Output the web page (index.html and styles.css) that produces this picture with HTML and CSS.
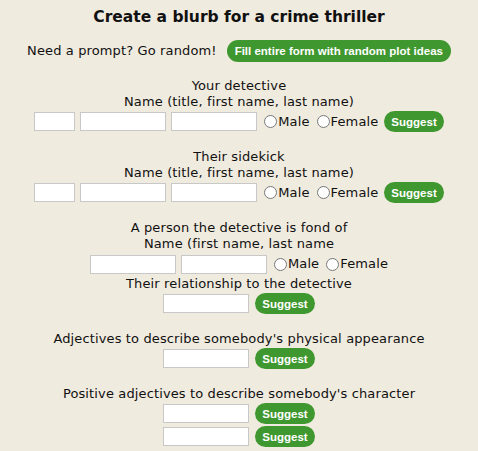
FILE: index.html
```html
<!DOCTYPE html>
<html lang="en">
<head>
    <meta charset="UTF-8">
    <title>Crime thriller blurb</title>
    <link rel="stylesheet" href="styles.css">
</head>
<body>
    <div class="container">
        <h2>Create a blurb for a crime thriller</h2>

        <div class="prompt">
            <span>Need a prompt? Go random!</span>
            <button class="btn fill-btn">Fill entire form with random plot ideas</button>
        </div>

        <div class="section">
            <p>Your detective</p>
            <p>Name (title, first name, last name)</p>
            <div class="row">
                <input type="text" class="small">
                <input type="text">
                <input type="text">
                <label class="radio"><input type="radio" name="g1">Male</label>
                <label class="radio"><input type="radio" name="g1">Female</label>
                <button class="btn">Suggest</button>
            </div>
        </div>

        <div class="section">
            <p>Their sidekick</p>
            <p>Name (title, first name, last name)</p>
            <div class="row">
                <input type="text" class="small">
                <input type="text">
                <input type="text">
                <label class="radio"><input type="radio" name="g2">Male</label>
                <label class="radio"><input type="radio" name="g2">Female</label>
                <button class="btn">Suggest</button>
            </div>
        </div>

        <div class="section">
            <p>A person the detective is fond of</p>
            <p>Name (first name, last name</p>
            <div class="row plain">
                <input type="text">
                <input type="text">
                <label class="radio"><input type="radio" name="g3">Male</label>
                <label class="radio"><input type="radio" name="g3">Female</label>
            </div>
            <p>Their relationship to the detective</p>
            <div class="row">
                <input type="text">
                <button class="btn">Suggest</button>
            </div>
        </div>

        <div class="section">
            <p>Adjectives to describe somebody's physical appearance</p>
            <div class="row">
                <input type="text">
                <button class="btn">Suggest</button>
            </div>
        </div>

        <div class="section">
            <p>Positive adjectives to describe somebody's character</p>
            <div class="row">
                <input type="text">
                <button class="btn">Suggest</button>
            </div>
            <div class="row">
                <input type="text">
                <button class="btn">Suggest</button>
            </div>
        </div>
    </div>
</body>
</html>
```

FILE: styles.css
```css
body {
    font-family: "DejaVu Sans", Verdana, sans-serif;
    font-size: 13px;
    line-height: 16px;
    letter-spacing: 0.13px;
    background: #f0ebdf;
    color: #111;
    margin: 0;
    padding: 0;
}
.container {
    text-align: center;
    padding-top: 7px;
}
h2 {
    font-size: 15.5px;
    line-height: 20px;
    letter-spacing: 0;
    margin: 0;
}
.prompt {
    display: flex;
    justify-content: center;
    align-items: center;
    gap: 9px;
    margin-top: 13px;
}
.section {
    margin-top: 16px;
}
.section p {
    margin: 0;
}
.row {
    display: flex;
    justify-content: center;
    align-items: center;
    gap: 5px;
    height: 23px;
}
.row.plain {
    height: 24px;
}
input[type="text"] {
    width: 82px;
    height: 15px;
    padding: 1px;
    border: 1px solid #c8c8c8;
    background: white;
    margin: 0;
}
input.small {
    width: 37px;
}
.radio {
    display: flex;
    align-items: center;
}
.radio input {
    width: 13px;
    height: 13px;
    margin: 0 1px 0 2px;
}
.btn {
    font-family: "Liberation Sans", Arial, sans-serif;
    font-weight: bold;
    font-size: 11.5px;
    letter-spacing: 0;
    color: white;
    background: #3f982f;
    border: none;
    border-radius: 11px;
    height: 21px;
    padding: 0 7px;
    margin-left: 1px;
}
.fill-btn {
    height: 22px;
    padding: 0 8px;
}
```
